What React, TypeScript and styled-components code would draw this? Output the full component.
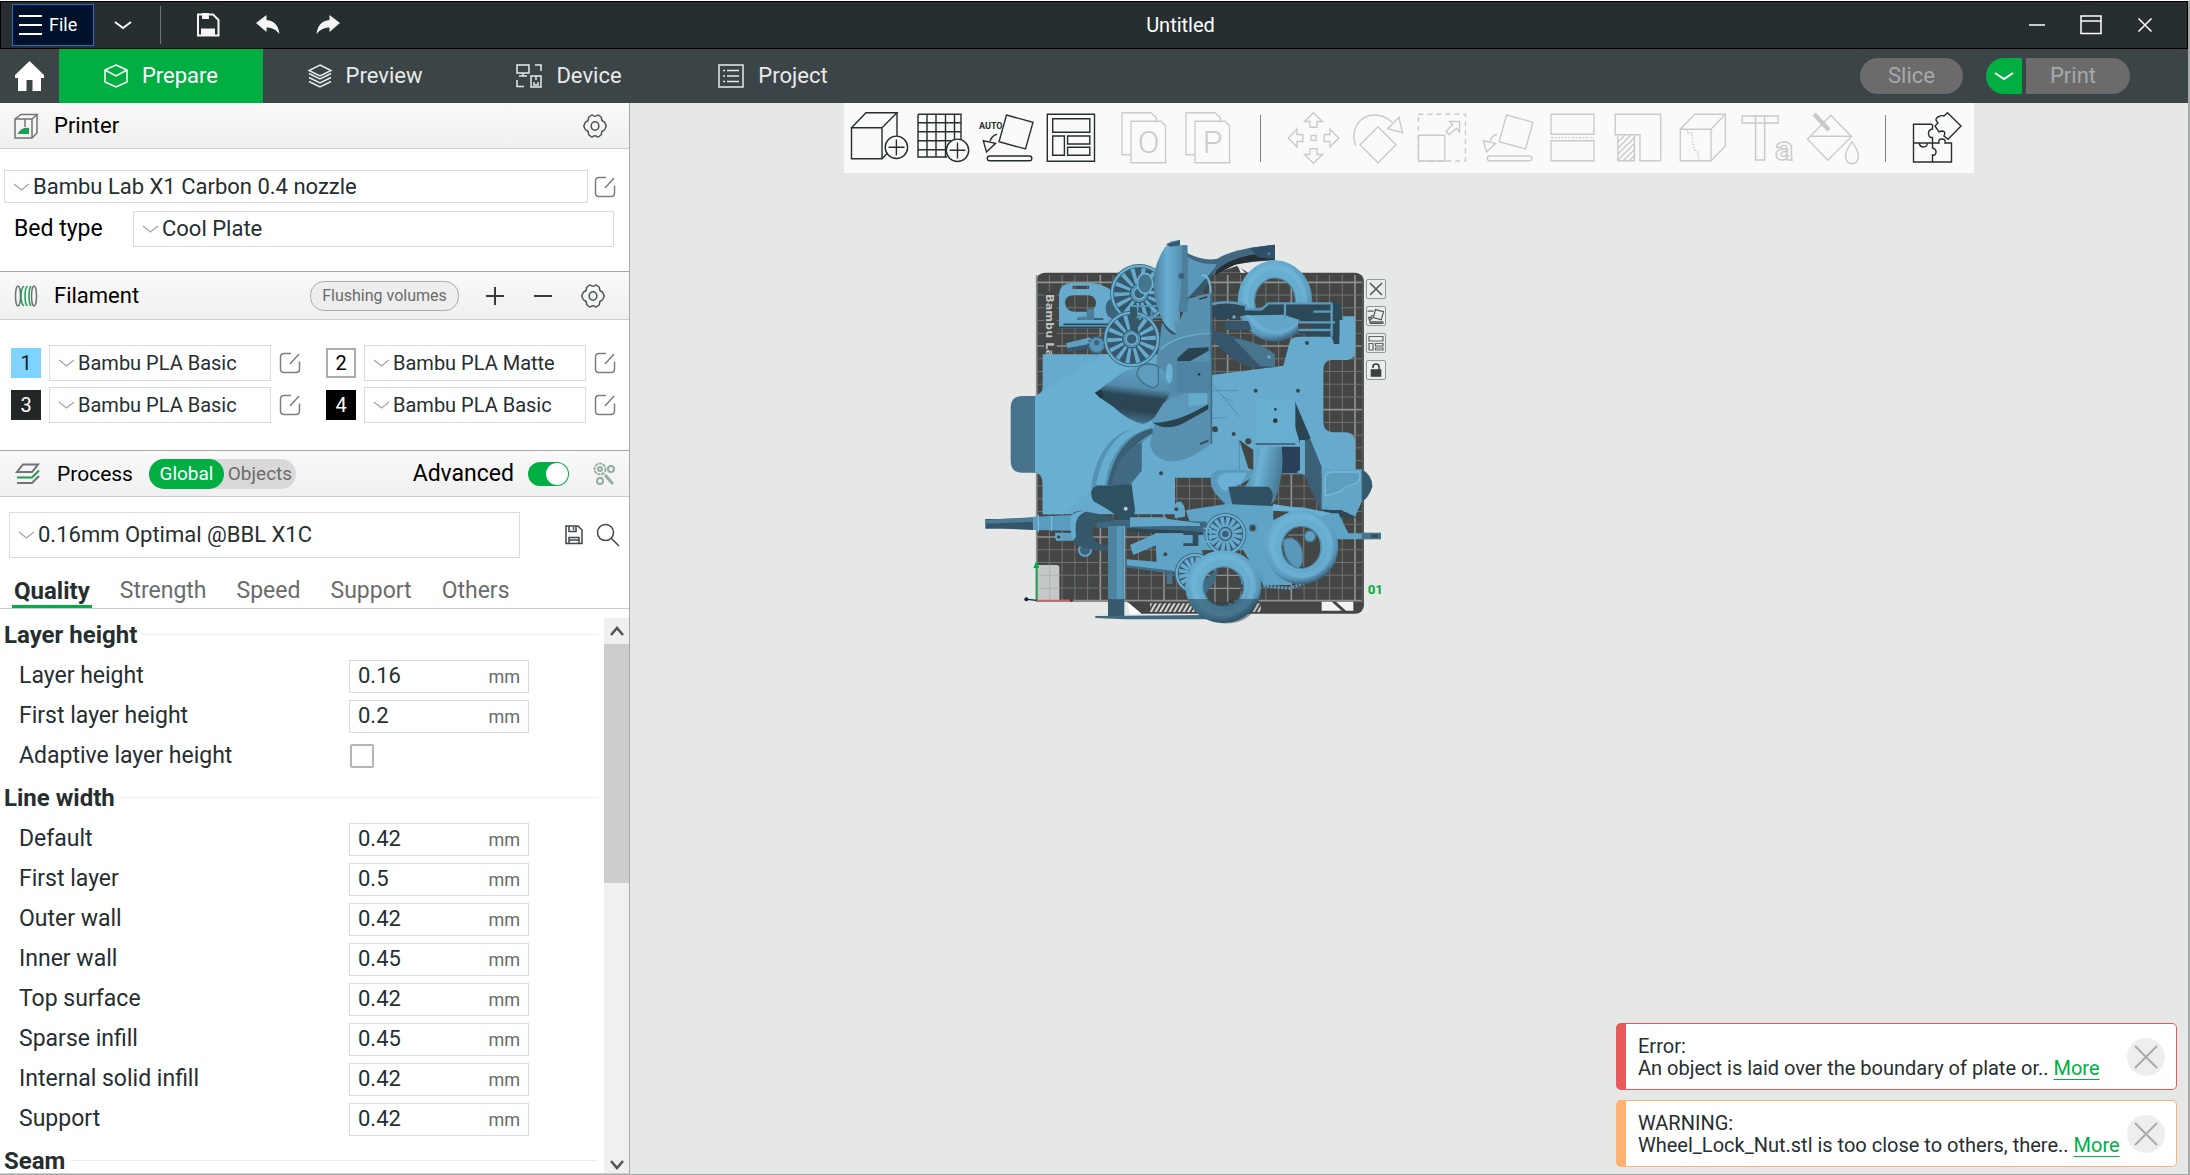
import React, { useState } from 'react';
import styled, { createGlobalStyle, css } from 'styled-components';

const color = {
  green: '#00ae42',
  ink: '#262e30',
  bar: '#3b4446',
  line: '#cecece',
  field: '#dbdbdb',
  muted: '#6b6b6b',
  canvas: '#e6e8e7',
  off: '#c9cbca',
};

const GlobalStyle = createGlobalStyle`
  * { box-sizing: border-box; }
  body {
    margin: 0;
    font-family: Roboto, "Noto Sans", sans-serif;
    font-size: 22px;
    line-height: 28px;
    color: ${color.ink};
    background: ${color.canvas};
  }
  button, input, select { font: inherit; color: inherit; margin: 0; padding: 0; }
  button { border: 0; background: none; }
  svg { display: block; flex: none; overflow: visible; }
`;

const Shell = styled.div`
  height: 100vh;
  display: flex;
  flex-direction: column;
  overflow: hidden;
  border-top: 1px solid #fff;
  border-right: 2px solid #a5a9a8;
  border-bottom: 1px solid #a5a9a8;
`;

/* ---------- title bar ---------- */
const TitleBar = styled.header`
  height: 48px;
  flex: none;
  display: flex;
  align-items: center;
  padding: 0 30px 0 11px;
  background: ${color.ink};
  border: 1px solid #000;
  color: #fff;
  font-size: 18px;
  line-height: 24px;
`;
const TitleGroup = styled.div<{ $gap: number }>`
  display: flex;
  align-items: center;
  gap: ${p => p.$gap}px;
`;
const FileButton = styled.button`
  display: flex;
  align-items: center;
  gap: 7px;
  width: 82px;
  height: 42px;
  padding-left: 6px;
  background: #00122b;
  border: 1px solid #1f70c1;
`;
const BarButton = styled.button`
  display: grid;
  place-items: center;
  width: 24px;
  height: 40px;
`;
const BarDivider = styled.span`
  width: 1px;
  height: 38px;
  margin-right: 10px;
  background: #6f7677;
`;
const DocTitle = styled.h1`
  flex: 1;
  margin: 0;
  padding-right: 4px;
  text-align: center;
  font-size: 20px;
  font-weight: 400;
`;

/* ---------- main tabs ---------- */
const TabBar = styled.nav`
  height: 54px;
  flex: none;
  display: flex;
  align-items: stretch;
  background: ${color.bar};
  color: #fff;
`;
const HomeButton = styled.button`
  width: 59px;
  display: grid;
  place-items: center;
`;
const MainTab = styled.button<{ $active?: boolean }>`
  width: 204px;
  display: flex;
  align-items: center;
  justify-content: center;
  gap: 14px;
  color: ${p => (p.$active ? '#fff' : '#e8eaea')};
  background: ${p => (p.$active ? color.green : 'transparent')};
`;
const Actions = styled.div`
  margin-left: auto;
  display: flex;
  align-items: center;
  padding-right: 58px;
`;
const Pill = styled.button<{ $shape: 'full' | 'left' | 'right' }>`
  height: 36px;
  display: grid;
  place-items: center;
  color: #a6a9aa;
  background: #6b6b6b;
  ${p => p.$shape === 'full' && css`width: 103px; border-radius: 18px; margin-right: 23px;`}
  ${p => p.$shape === 'left' && css`width: 36px; border-radius: 18px 0 0 18px; background: ${color.green}; margin-right: 4px;`}
  ${p => p.$shape === 'right' && css`width: 104px; border-radius: 0 18px 18px 0; padding-right: 10px;`}
`;

/* ---------- sidebar ---------- */
const Body = styled.div`
  flex: 1;
  min-height: 0;
  display: flex;
`;
const Sidebar = styled.aside`
  width: 630px;
  flex: none;
  display: flex;
  flex-direction: column;
  background: #fff;
  border-right: 1px solid #a5a9a8;
`;
const PanelHeader = styled.div<{ $h: number; $first?: boolean; $end?: number }>`
  height: ${p => p.$h}px;
  flex: none;
  display: flex;
  align-items: center;
  padding: 0 ${p => p.$end ?? 22}px 0 14px;
  color: #000;
  background: linear-gradient(#f9f9f9, #f0f0f0);
  border-top: ${p => (p.$first ? 0 : 1)}px solid #a5a9a8;
  border-bottom: 1px solid ${color.line};
`;
const PanelTitle = styled.h2`
  margin: 0 auto 0 16px;
  font-size: 22px;
  font-weight: 400;
`;
const IconButton = styled.button<{ $w?: number }>`
  width: ${p => p.$w ?? 24}px;
  height: 28px;
  display: grid;
  place-items: center;
`;
const FlushButton = styled.button`
  height: 30px;
  width: 149px;
  margin-right: 24px;
  border: 1px solid #acaeae;
  border-radius: 14px;
  background: #eee;
  color: ${color.muted};
  font-size: 16px;
  line-height: 22px;
`;
const HeaderTools = styled.div`
  display: flex;
  gap: 24px;
  align-items: center;
`;
const SelectBox = styled.span<{ $h: number }>`
  flex: 1;
  min-width: 0;
  height: ${p => p.$h}px;
  display: flex;
  align-items: center;
  gap: 3px;
  padding: 0 8px;
  border: 1px solid ${color.field};
  background: #fff;
`;
const BareSelect = styled.select`
  appearance: none;
  flex: 1;
  min-width: 0;
  border: 0;
  outline: 0;
  background: transparent;
`;
const PrinterBody = styled.div`
  height: 122px;
  flex: none;
  padding: 21px 15px 0 4px;
  display: flex;
  flex-direction: column;
  gap: 8px;
`;
const Line = styled.div`
  display: flex;
  align-items: center;
  gap: 6px;
`;
const BedLine = styled.div`
  display: grid;
  grid-template-columns: 119px 1fr;
  align-items: center;
  padding-left: 10px;
`;
const BedLabel = styled.label`
  color: #000;
  font-size: 23px;
`;
const FilamentGrid = styled.div`
  height: 130px;
  flex: none;
  display: grid;
  grid-template-columns: 1fr 1fr;
  grid-auto-rows: 36px;
  align-content: start;
  gap: 6px 25px;
  padding: 25px 13px 0 11px;
`;
const FilamentItem = styled.div`
  display: flex;
  align-items: center;
  gap: 8px;
  font-size: 20px;
`;
const Swatch = styled.button<{ $bg: string; $fg: string; $outlined?: boolean }>`
  width: 30px;
  height: 30px;
  line-height: 24px;
  background: ${p => p.$bg};
  color: ${p => p.$fg};
  border: ${p => (p.$outlined ? '2px solid #acacac' : '0')};
`;
const Segmented = styled.div`
  display: flex;
  width: 147px;
  height: 30px;
  margin: 0 auto 0 16px;
  border-radius: 15px;
  background: #d9d9d9;
`;
const Segment = styled.button<{ $on?: boolean }>`
  flex: ${p => (p.$on ? '0 0 75px' : '1')};
  border-radius: 15px;
  font-size: 19px;
  line-height: 22px;
  background: ${p => (p.$on ? color.green : 'transparent')};
  color: ${p => (p.$on ? '#fff' : color.muted)};
`;
const ProcessTitle = styled(PanelTitle)`
  margin: 0;
  padding-left: 17px;
  font-size: 21px;
`;
const SwitchLabel = styled.label`
  display: flex;
  align-items: center;
  gap: 14px;
  margin-right: 23px;
  font-size: 23px;
`;
const Switch = styled.input`
  appearance: none;
  width: 41px;
  height: 24px;
  border-radius: 12px;
  background: #bbb;
  display: flex;
  align-items: center;
  &::after {
    content: '';
    width: 22px;
    height: 22px;
    margin: 0 1px;
    border-radius: 50%;
    background: #fff;
  }
  &:checked { background: ${color.green}; justify-content: flex-end; }
`;
const PresetLine = styled.div`
  display: flex;
  align-items: center;
  gap: 8px;
  flex: none;
  padding: 15px 9px 0 9px;
`;
const PresetSelect = styled.div`
  display: flex;
  width: 512px;
  margin-right: 32px;
`;
const SettingTabs = styled.div`
  flex: none;
  display: flex;
  gap: 26px;
  height: 51px;
  padding: 0 12px;
  border-bottom: 1px solid ${color.line};
`;
const SettingTab = styled.button<{ $on?: boolean }>`
  height: 50px;
  padding: 19px 2px 0;
  color: ${p => (p.$on ? color.ink : color.muted)};
  font-size: ${p => (p.$on ? 24 : 23)}px;
  font-weight: ${p => (p.$on ? 700 : 400)};
  border-bottom: 3px solid ${p => (p.$on ? color.green : 'transparent')};
`;
const ScrollPane = styled.div`
  flex: 1;
  min-height: 0;
  display: flex;
  border-bottom: 1px solid #d0d0d0;
`;
const Settings = styled.div`
  flex: 1;
  padding: 4px 6px 0 4px;
  overflow: hidden;
`;
const GroupTitle = styled.h3`
  display: flex;
  align-items: center;
  gap: 5px;
  height: 43px;
  margin: 0;
  font-size: 24px;
  font-weight: 700;
  &::after { content: ''; flex: 1; height: 1px; background: #ececec; }
`;
const SettingRow = styled.div`
  display: grid;
  grid-template-columns: 330px 180px;
  align-items: center;
  height: 40px;
  padding-left: 15px;
`;
const SettingLabel = styled.label`
  font-size: 23px;
`;
const ValueBox = styled.span`
  display: flex;
  align-items: baseline;
  height: 33px;
  padding: 1px 8px;
  border: 1px solid ${color.field};
`;
const ValueInput = styled.input`
  flex: 1;
  min-width: 0;
  height: 28px;
  border: 0;
  outline: 0;
  background: transparent;
`;
const Unit = styled.span`
  font-size: 18px;
  color: ${color.muted};
`;
const Check = styled.input`
  appearance: none;
  width: 24px;
  height: 24px;
  margin-left: 1px;
  border: 2px solid #b4b4b4;
  border-radius: 2px;
  background: #fff;
`;
const ScrollTrack = styled.div`
  width: 25px;
  margin-top: 9px;
  display: flex;
  flex-direction: column;
  background: #f0f0f0;
`;
const ScrollButton = styled.button<{ $h: number }>`
  height: ${p => p.$h}px;
  flex: none;
  display: grid;
  place-items: center;
`;
const ScrollThumb = styled.div`
  flex: 0 0 43%;
  background: #cdcdcd;
`;
const ScrollRest = styled.div`
  flex: 1;
`;

/* ---------- viewport ---------- */
const Viewport = styled.main`
  flex: 1;
  min-width: 0;
  position: relative;
  display: flex;
  flex-direction: column;
  align-items: center;
  background: ${color.canvas};
`;
const Toolbar = styled.div`
  height: 70px;
  display: flex;
  padding: 0 4px;
  background: #fafafa;
`;
const ToolGroup = styled.div`
  display: flex;
  align-items: center;
  &:nth-child(2) { margin-left: 8px; }
`;
const ToolButton = styled.button<{ $w?: number }>`
  width: ${p => p.$w ?? 64}px;
  height: 70px;
  display: grid;
  place-items: center;
`;
const ToolDivider = styled.span`
  width: 1px;
  height: 47px;
  margin: 12px 20px;
  background: #7c8383;
  &:nth-child(3) { margin-right: 19px; }
`;
const Plate = styled.div`
  position: absolute;
  left: 340px;
  top: 117px;
`;
const PlateButtons = styled.div`
  position: absolute;
  left: 396px;
  top: 59px;
  display: flex;
  flex-direction: column;
  gap: 7px;
`;
const PlateButton = styled.button`
  width: 20px;
  height: 20px;
  display: grid;
  place-items: center;
  border: 1px solid #8b9a93;
  border-radius: 2px;
  background: #eceeed;
`;
const Toasts = styled.div`
  position: absolute;
  right: 11px;
  bottom: 7px;
  display: flex;
  flex-direction: column;
  gap: 10px;
`;
const Toast = styled.div<{ $tone: string }>`
  width: 561px;
  height: 67px;
  display: flex;
  align-items: center;
  padding: 0 11px 0 12px;
  border: 1px solid ${p => p.$tone};
  border-left-width: 10px;
  border-radius: 5px;
  background: #fff;
  font-size: 20px;
  line-height: 22px;
`;
const ToastText = styled.p`
  flex: 1;
  margin: 0;
  white-space: nowrap;
`;
const More = styled.a`
  color: ${color.green};
  text-decoration: underline;
  text-decoration-thickness: 1px;
  text-underline-offset: 4px;
`;
const ToastClose = styled.button`
  width: 38px;
  height: 38px;
  display: grid;
  place-items: center;
  border-radius: 50%;
  background: #eee;
`;

/* ---------- small icons ---------- */
type IconProps = { w: number; h: number; stroke?: string; sw?: number; children: React.ReactNode };
const Icon = ({ w, h, stroke = 'currentColor', sw = 1.5, children }: IconProps) => (
  <svg width={w} height={h} viewBox={`0 0 ${w} ${h}`} fill="none" stroke={stroke} strokeWidth={sw} aria-hidden="true">
    {children}
  </svg>
);
const Gear = () => (
  <Icon w={24} h={24} stroke="#4a5253">
    <path d="M8 1.5Q9 .5 10 1.5Q12 3 14 1.5Q15 .5 16 1.5L18 3Q18.500 3.500 18.500 4.500Q18.500 7 20.500 7.500Q21.500 8 22 9L23.200 12L22 15Q21.500 16 20.500 16.500Q18.500 17 18.500 19.500Q18.500 20.500 18 21L16 22.500Q15 23.500 14 22.500Q12 21 10 22.500Q9 23.500 8 22.500L6 21Q5.500 20.500 5.500 19.500Q5.500 17 3.500 16.500Q2.500 16 2 15L.8 12L2 9Q2.500 8 3.500 7.500Q5.500 7 5.500 4.500Q5.500 3.500 6 3Z" />
    <ellipse cx="12" cy="12" rx="3.800" ry="4.200" />
  </Icon>
);
const Edit = () => (
  <Icon w={22} h={22} stroke="#7b7f80">
    <path d="M12 1.500H5Q1.500 1.500 1.500 5V17Q1.500 20.500 5 20.500H17Q20.500 20.500 20.500 17V9.500M11 12L20 2" />
  </Icon>
);
const Chevron = ({ stroke = '#a3a6a6', w = 17, sw = 1.3 }: { stroke?: string; w?: number; sw?: number }) => (
  <Icon w={w} h={10} stroke={stroke} sw={sw}>
    <path d={`M1 2L${w / 2} 8L${w - 1} 2`} />
  </Icon>
);
const Floppy = () => (
  <Icon w={18} h={20} stroke="#3f4748">
    <path d="M1 1H13L17 5V18.500H1ZM4 1V6.500H11V1M8.500 2V5M4 18V12.500H14V18M4 15H14" />
  </Icon>
);

const Select = ({ id, label, value, h }: { id: string; label: string; value: string; h: number }) => (
  <SelectBox $h={h}>
    <Chevron />
    <BareSelect id={id} aria-label={label} defaultValue={value}>
      <option>{value}</option>
    </BareSelect>
  </SelectBox>
);

/* ---------- toolbar drawings ---------- */
const Tool = ({ on, children }: { on?: boolean; children: React.ReactNode }) => (
  <Icon w={60} h={56} stroke={on ? color.ink : color.off} sw={1.4}>{children}</Icon>
);
const FlattenShape = () => (
  <>
    <path d="M28.500 5L55 12.300L47.500 39L21 31.700ZM19 24.300Q14 25.500 12 31M5.300 30.700L17.600 33.300L8.500 42Z" />
    <rect x="9.300" y="46" width="44.500" height="4.700" rx="2.300" />
  </>
);
const ArrangeShape = () => (
  <path d="M5.300 4.300H52.500V51.300H5.300ZM10.700 8.700H47.800V22.300H10.700ZM10.700 26H22.400V45.300H10.700ZM25.600 26H47.800V34H25.600ZM25.600 37.300H47.800V45.300H25.600Z" />
);
const Page = ({ letter }: { letter: string }) => (
  <Tool>
    <path d="M16.500 44.700H8V2.700H37L42.500 8V11M17 11.300H47L51.500 16V52.700H17Z" />
    <text x="34.500" y="43" fontSize="32" fontWeight="300" textAnchor="middle" fill={color.off} stroke="none">{letter}</text>
  </Tool>
);
const addTools = [
  { name: 'Add', art: <Tool on><path d="M1.500 17.700H32V48.700H1.500ZM1.500 17.700L16 2.700H47L32 17.700M47 2.700V26M32 48.700L37 43.500" /><circle cx="46.400" cy="37.300" r="11.200" /><path d="M38.500 37.300H54.500M46.400 29.500V45.500" /></Tool> },
  { name: 'Add plate', art: <Tool on><path d="M4 4.300H47V29M4 4.300V47H33M13 4V47M22 4V47M31.500 4V47M40.500 4V29M4 12.700H47M4 21.700H47M4 30.700H37M4 39.700H32" /><circle cx="43.500" cy="40.300" r="11.200" /><path d="M35.500 40.300H51.500M43.500 32.500V48.500" /></Tool> },
  { name: 'Auto orient', art: <Tool on><FlattenShape /><text x="1" y="19" fontSize="9" fontWeight="700" fill={color.ink} stroke="none">AUTO</text></Tool> },
  { name: 'Arrange', art: <Tool on><ArrangeShape /></Tool> },
];
const arrow = 'M30.500 2.800L39.500 11.500H34V17.300H27V11.500H21.500Z';
const editTools = [
  { name: 'Move', art: <Tool>{[0, 90, 180, 270].map(a => <path key={a} d={arrow} transform={`rotate(${a} 30.5 28)`} />)}<rect x="28" y="25.500" width="5" height="5" /></Tool> },
  { name: 'Rotate', art: <Tool><path d="M30 16.700L48 34.700L30 52.700L12 34.700ZM7.600 36C2 20 11 5 27 5Q36 5 44 12M51 7.300L54.500 22.700L39.600 18.700Z" /></Tool> },
  { name: 'Scale', art: <Tool><rect x="5.400" y="4.300" width="47.100" height="46.700" strokeDasharray="5 4" /><path d="M5.400 25.300H31.800V51H5.400ZM36 24.500L33 21.500L39.500 14.500L36.500 11.500H46.500V22L43.500 18.500Z" /></Tool> },
  { name: 'Lay on face', art: <Tool><FlattenShape /></Tool> },
  { name: 'Cut', art: <Tool><path d="M8 4.300H51V24.300H8ZM8 30.700H51V50.700H8Z" /><path d="M8 27.600H51" strokeDasharray="2 1.500" /></Tool> },
  { name: 'Support painting', art: <Tool><path d="M7.200 4.300H52.700V50.700H32V24.700H7.200ZM9.800 24.700V50.700H26.400V24.700M10 32L17 25M10 38L23 25M10 44L26 28M10 50L26 34M15 51L26 40M21 51L26 46" /></Tool> },
  { name: 'Seam painting', art: <Tool><path d="M7.300 19.300H38V50.700H7.300ZM7.300 19.300L21.600 4.300H52.400L38 19.300M52.400 4.300V36L38 50.700" /><path d="M14.400 20V23H18.500L21 39L25.400 43V50" strokeDasharray="1.500 1.500" /></Tool> },
  { name: 'Text shape', art: <Tool><text x="3" y="50" fontSize="62" fontWeight="700" fill="#fafafa">T<tspan x="37" fontSize="34">a</tspan></text></Tool> },
  { name: 'Colour painting', art: <Tool><path d="M27.800 5.300L48.500 26.500L24.800 50.300L4.500 29.300ZM7 26.300H48M49 31.700Q55.500 41 55.500 46.500Q55 53.500 49 53.700Q43 53.500 42.500 46.500Q42.500 41 49 31.700Z" /><path d="M11 4L26 20" strokeWidth="4.500" /></Tool> },
];
const Assembly = () => (
  <Tool on>
    <path d="M24 14.300H5.500V52H43.500V33H37Q38 29 34 29Q30 29 31 33H5.500M11 33Q12 37 15.500 37Q19 37 19.500 33M24.500 14.300V19Q20 20 20.500 24Q21 28 24.500 27.500V38Q28.500 39 28 42.500Q27.500 46 24.500 45V52" />
    <path d="M39.500 2.700L53 16L40 29.300L36 26Q38 22 35 21Q32 21 31 22L27 16L30 13Q26 9 30 7Q34 5 36 6Z" />
  </Tool>
);

/* ---------- plate scene, drawn at three units per pixel ---------- */
const steps = Array.from({ length: 26 }, (_, i) => i);
const Rim = ({ x, y, r, n = 14 }: { x: number; y: number; r: number; n?: number }) => (
  <g>
    <circle cx={x} cy={y} r={r} fill="#36566a" />
    {Array.from({ length: n }, (_, i) => (
      <path key={i} d={`M${x - 3} ${y}L${x - 7} ${y - r}H${x + 7}L${x + 3} ${y}Z`} fill="#66abcd" transform={`rotate(${(360 / n) * i + 10} ${x} ${y})`} />
    ))}
    <circle cx={x} cy={y} r={r - 3} fill="none" stroke="#3f6a82" strokeWidth="12" />
    <circle cx={x} cy={y} r={r - 3} fill="none" stroke="#6cb3d6" strokeWidth="6" />
    <circle cx={x} cy={y} r={r * 0.33} fill="#5791b0" stroke="#2f4f60" strokeWidth="3" />
    <circle cx={x} cy={y} r={r * 0.2} fill="#3a5f74" stroke="#6cb3d6" strokeWidth="4" />
  </g>
);
const Tire = ({ x, y, rx, ry, hx, hy }: { x: number; y: number; rx: number; ry: number; hx: number; hy: number }) => {
  const ring = (a: number, b: number) => `M${x - a} ${y}a${a} ${b} 0 1 0 ${2 * a} 0a${a} ${b} 0 1 0 ${-2 * a} 0Z`;
  return (
    <g fillRule="evenodd">
      <path d={ring(rx, ry) + ring(hx, hy)} fill="url(#tire)" />
      <ellipse cx={x} cy={y - 4} rx={(rx + hx) / 2 + 2} ry={(ry + hy) / 2 + 2} fill="none" stroke="#72b8dc" strokeWidth={(rx - hx) * 0.3} opacity="0.55" />
      <path d={ring(hx + 3, hy + 3) + ring(hx, hy)} fill="#4b7f9b" />
    </g>
  );
};
const Scene = () => (
  <svg width="430" height="420" viewBox="0 0 1290 1260" role="img" aria-label="Build plate with model parts">
    <defs>
      <radialGradient id="tire" cx="0.45" cy="0.4" r="0.62">
        <stop offset="0.6" stopColor="#67add0" />
        <stop offset="0.85" stopColor="#5b99bb" />
        <stop offset="1" stopColor="#315468" />
      </radialGradient>
      <linearGradient id="shell" x1="0" x2="1">
        <stop offset="0" stopColor="#4b7f9b" />
        <stop offset="0.4" stopColor="#68aed2" />
        <stop offset="0.75" stopColor="#5a97b8" />
        <stop offset="1" stopColor="#4a7b96" />
      </linearGradient>
      <linearGradient id="cone" x1="0.35" y1="0" x2="0.2" y2="1">
        <stop offset="0" stopColor="#5e9fc1" />
        <stop offset="0.35" stopColor="#548cab" />
        <stop offset="0.5" stopColor="#2b4755" />
        <stop offset="0.72" stopColor="#2b4452" />
        <stop offset="1" stopColor="#4d819e" />
      </linearGradient>
      <linearGradient id="arch" x1="0" x2="1" y1="0.3" y2="0.6">
        <stop offset="0" stopColor="#3f6b83" />
        <stop offset="0.45" stopColor="#6bb2d6" />
        <stop offset="1" stopColor="#426f87" />
      </linearGradient>
      <pattern id="hatch" width="14" height="28" patternUnits="userSpaceOnUse" patternTransform="skewX(-30)">
        <rect width="7" height="28" fill="#d8dada" />
      </pattern>
    </defs>

    {/* plate */}
    <rect x="198" y="158" width="984" height="1023" rx="26" fill="#434645" />
    <path d="M740 158L800 138L835 158Z" fill="#434645" />
    <path d="M804 138L826 158H812Z" fill="#fff" />
    {steps.map(i => (
      <path key={`v${i}`} d={`M${200 + i * 38.2} 165V1142`} stroke={i % 5 ? '#707372' : '#8e9190'} strokeWidth={i % 5 ? 3 : 5} />
    ))}
    {steps.map(i => (
      <path key={`h${i}`} d={`M200 ${1142 - i * 38.2}H1175`} stroke={i % 5 ? '#707372' : '#8e9190'} strokeWidth={i % 5 ? 3 : 5} />
    ))}
    <path d="M1179 180V1150" stroke="#555857" strokeWidth="6" />
    <rect x="222" y="215" width="38" height="200" fill="#434645" />
    <text transform="translate(229 222) rotate(90)" fontSize="34" fontWeight="700" fill="#bfc2c1" fontFamily="DejaVu Sans, sans-serif">Bambu Lab</text>
    <path d="M195 1145H470L515 1183H195Z" fill="#e6e8e7" />
    <path d="M470 1145H530L515 1183Z" fill="#434645" />
    <path d="M472 1145L515 1181H480Z" fill="#fff" />
    <rect x="540" y="1150" width="332" height="26" fill="url(#hatch)" />
    <path d="M1055 1145H1085L1115 1172H1055ZM1098 1145H1150V1172H1128Z" fill="#f2f3f3" />
    <path d="M203 1035H260Q268 1035 268 1043V1140H203Z" fill="#c6c8c7" />
    <path d="M239 1035V1140M203 1066H268M203 1105H268" stroke="#9fb0a4" strokeWidth="2" />

    {/* flat body panel */}
    <path d="M200 528H155Q122 530 122 562V725Q124 758 155 758H200Z" fill="#46738b" />
    <path d="M218 403H725V465L940 437L958 370Q965 350 985 350H1108V289H1155V398Q1152 418 1130 420H1085Q1060 422 1060 450V610Q1062 636 1090 637H1130Q1155 640 1155 665V775H1055V760H905V773H615V883H218V790Q216 758 195 757V528Q218 525 218 500Z" fill="#66abcd" />
    <path d="M195 528V757Q216 758 218 790V883H280L500 690V403H400Z" fill="#69afd2" />
    <path d="M725 490L810 592M725 594H770M725 512H806M757 530L790 545M808 660V760" stroke="#4d819d" strokeWidth="2" fill="none" />
    <g fill="#3a464b">
      <circle cx="857" cy="512" r="6" /><circle cx="984" cy="512" r="6" /><circle cx="1011" cy="369" r="6" />
      <circle cx="791" cy="642" r="6" /><circle cx="835" cy="664" r="9" /><circle cx="735" cy="628" r="9" /><circle cx="573" cy="760" r="6" />
    </g>
    <path d="M808 660L835 745L850 750V690Z" fill="#434645" />
    <path d="M935 680H1010V760H925Z" fill="#29405a" />
    <path d="M975 545L1055 740L1055 875L1000 760Z" fill="#3c6076" />
    <path d="M975 545L1022 655L990 670L975 620Z" fill="#2b4452" />
    <rect x="857" y="538" width="119" height="135" rx="14" fill="#68aed1" />
    <path d="M857 672H976" stroke="#35566a" strokeWidth="5" />
    <circle cx="916" cy="602" r="7" fill="#2b3a42" /><circle cx="916" cy="568" r="4" fill="#2b3a42" />

    {/* bracket, arm and gear at the top left */}
    <path fillRule="evenodd" d="M267 325V222Q270 190 304 189H365Q400 192 425 212L440 325ZM308 197V207H357V197ZM310 225Q285 228 285 248Q288 274 312 275H355Q378 270 378 248Q376 228 355 225Z" fill="#66abcd" />
    <path d="M267 322H445M280 313H440M322 297H400" stroke="#2d4a5a" strokeWidth="5" />
    <path d="M350 266H372V300H325V290H350Z" fill="#4b7f9b" />
    <path d="M288 370L360 352L372 376L296 395Z" fill="#5da0c3" />
    <path d="M290 385L370 370L372 382L296 396Z" fill="#35586c" />
    <circle cx="380" cy="375" r="24" fill="#5794b5" stroke="#3b6379" strokeWidth="7" strokeDasharray="7 5" />
    <circle cx="380" cy="368" r="8" fill="#3b6379" />
    <ellipse cx="428" cy="265" rx="24" ry="32" fill="#3c6379" stroke="#66abcd" strokeWidth="5" />
    <Rim x={508} y={220} r={85} />
    <ellipse cx="525" cy="190" rx="23" ry="30" fill="#46758e" stroke="#6cb3d6" strokeWidth="5" />
    <Rim x={485} y={357} r={82} />
    <path d="M480 258L500 250L505 345L480 325Z" fill="#36566a" />
    <path d="M480 258H570M500 292H575M510 282V300M545 270V300" stroke="#5594b5" strokeWidth="6" />

    {/* top right wing, tyre and axle */}
    <path d="M650 98Q700 125 742 116Q790 85 915 74V121Q860 122 800 132Q755 145 700 185L650 240Z" fill="#416880" />
    <path d="M740 150Q790 105 900 98L915 120Q850 122 795 134L735 165Z" fill="#242e33" />
    <path d="M840 84L915 74V118L865 112Z" fill="#2f4e6a" />
    <path d="M652 110Q690 135 740 132Q725 170 652 236Z" fill="#5a96b7" />
    <path d="M652 236L735 145L700 215Z" fill="#35586c" />
    <path d="M694 166Q722 162 722 225" stroke="#6cb3d6" strokeWidth="7" fill="none" />
    <path d="M725 330Q800 345 915 402V442H850Q780 430 725 352Z" fill="#36576b" />
    <path d="M790 355Q860 362 915 402V440L870 438Z" fill="#47758e" />
    <ellipse cx="915" cy="233" rx="66" ry="74" fill="none" stroke="#2f4f60" strokeWidth="12" />
    <Tire x={915} y={243} rx={112} ry={122} hx={60} hy={68} />
    <path d="M765 303H835L845 330H765Z" fill="#36576b" />
    <path d="M725 262Q770 240 830 255V266H880Q890 250 920 250H1080L1112 250L1118 300L1108 300V372H1092L1085 350L985 340V302L940 285Q870 290 830 285L760 300Q725 296 725 280Z" fill="#2d4958" />
    <path d="M985 306H1025V330H985Z" fill="#434645" />
    <path d="M850 286Q875 330 915 333Q960 330 990 300L940 284Z" fill="#62a6c9" />
    <path d="M725 252Q775 240 828 256V268H875L895 250H1085M1030 275H1085M945 250V295M985 307H1095M985 330H1085M1085 250V350" stroke="#5b9bbd" strokeWidth="7" fill="none" />
    <circle cx="792" cy="291" r="5" fill="#6cb3d6" />
    <circle cx="897" cy="411" r="5" fill="#78aac3" /><circle cx="897" cy="101" r="5" fill="#54788d" />

    {/* central body */}
    <path d="M630 300L655 236L722 218V672Q640 735 590 722Q545 712 540 670L565 560Q550 430 568 380L575 310Z" fill="#5891b0" />
    <path d="M568 395Q610 350 722 340V386Q650 385 625 420V520H720V552L640 600Q580 625 548 600Z" fill="#548ba9" />
    <path d="M622 415L655 385L716 382V392L660 424H622Z" fill="#29424f" />
    <path d="M572 390Q610 345 722 340" stroke="#6bb0d2" strokeWidth="4" fill="none" />
    <rect x="622" y="424" width="98" height="94" fill="#4e84a1" />
    <path d="M688 238L712 230M690 672L715 662" stroke="#29424f" strokeWidth="5" />
    <circle cx="687" cy="463" r="4" fill="#233740" />
    <path d="M602 64L630 60V76H652V275H630V306H613L620 342Q603 350 580 305Q538 220 556 145Q572 90 602 64Z" fill="url(#shell)" />
    <path d="M637 76H652V275H625Q640 170 637 76Z" fill="#4b7e99" />
    <path d="M556 285L578 303Q595 330 620 342Q600 350 575 305Z" fill="#2f4d5e" />
    <path d="M588 72L630 60V76L600 80Z" fill="#365a70" />
    <circle cx="634" cy="168" r="9" fill="#3c6379" />
    <path d="M375 518L440 470Q480 440 540 432Q580 440 598 475Q610 520 585 545Q560 600 520 612Q470 600 430 560L390 533Z" fill="url(#cone)" />
    <ellipse cx="598" cy="460" rx="10" ry="30" fill="#7ac2e8" opacity="0.7" />
    <path d="M500 462Q505 432 535 432Q565 434 565 445V490Q560 505 545 502Q510 490 500 462Z" fill="#5e9dbe" stroke="#41708a" strokeWidth="4" />
    <path d="M375 518L395 510L400 530L390 534Z" fill="#24363f" />
    <path d="M545 605L580 550Q620 520 660 520H712V555L620 612Q570 630 545 605Z" fill="#5b98b9" />
    <path d="M548 608Q620 610 715 552V568L640 610Q590 635 548 608Z" fill="#29424f" />
    <path d="M656 520H712V552L656 560Z" fill="#65a9cb" />
    <path d="M724 218V672" stroke="#3e6a82" strokeWidth="5" />

    {/* left arch */}
    <path d="M545 615Q430 620 385 720Q362 780 365 805L480 795L515 750V670L548 640Z" fill="#5491b2" />
    <path d="M548 625Q440 650 412 795H440Q450 690 548 640Z" fill="#3a5f74" />
    <path d="M540 612Q410 625 378 795H405Q425 650 548 622Z" fill="#67add0" />
    <path d="M515 665V752L480 795H425Q440 700 515 665Z" fill="#406b83" />
    <path d="M365 810Q372 795 400 797L485 793L495 870Q492 900 475 903Q450 905 430 880Q395 855 372 845Q360 830 365 810Z" fill="#2f5060" />
    <circle cx="467" cy="866" r="6" fill="#b9cbd4" />

    {/* right arch, mirror and flared shell */}
    <path d="M722 780Q722 750 750 750H850V770L800 800L790 870Q770 860 745 830Q722 810 722 780Z" fill="#5a9abd" />
    <path d="M742 782Q745 760 770 758H830L815 790Q780 800 765 815Q745 800 742 782Z" fill="#6bb1d5" />
    <path d="M862 680H935Q945 760 915 840L860 900L800 830Q860 770 862 680Z" fill="url(#arch)" />
    <path d="M775 800H895Q915 815 905 845Q890 890 850 899Q820 900 790 868Z" fill="#2f5060" />
    <circle cx="816" cy="866" r="6" fill="#b9cbd4" />
    <path d="M1055 748H1175Q1207 765 1207 800Q1195 835 1175 845L1155 890L1115 870H1055Z" fill="#62a5c7" />
    <path d="M1175 748Q1207 765 1207 800Q1195 835 1175 845Z" fill="#365a6d" />
    <path d="M1066 770Q1070 756 1090 756H1165Q1176 775 1160 790Q1130 795 1110 815L1066 828Z" fill="#5d9dbf" stroke="#76b9db" strokeWidth="4" />
    <path d="M1055 868L1115 872L1162 893L1090 892Z" fill="#2c4857" />
    <path d="M990 660H1005V765L980 757L990 750Z" fill="#64a8ca" />

    {/* lower chassis */}
    <path d="M650 870L770 852L1000 862L1085 880L1100 1000L960 1095H880L820 990H690L650 880Z" fill="#5fa3c6" />
    <path d="M910 852L1085 880L1050 890L905 872Z" fill="#6bb2d6" />
    <path d="M910 872V900L960 875Z" fill="#434645" />
    <path d="M1085 880H1105L1135 940H1180V958H1100L1085 920Z" fill="#5fa3c6" />
    <path d="M1175 938H1233V958H1175Z" fill="#46738b" /><path d="M1204 943H1224V953H1204Z" fill="#2f4d5d" />
    <path d="M46 897H100L190 892V930L100 926H46Z" fill="#35566a" />
    <path d="M46 900L100 896L190 893V905L46 911Z" fill="#4a7b95" />
    <path d="M190 890L310 885V932L190 930Z" fill="#5b9bbd" /><path d="M205 885V935M245 888V932" stroke="#77bde0" strokeWidth="4" />
    <path d="M255 938H310V962H258Z" fill="#5da0c2" /><circle cx="266" cy="951" r="8" fill="#434645" stroke="#66abcd" strokeWidth="5" />
    <circle cx="345" cy="990" r="18" fill="#3c6379" stroke="#5da0c2" strokeWidth="6" />
    <path d="M380 900H590L710 905V935L480 925H380Z" fill="#3d677f" />
    <path d="M480 892H590V918L480 920ZM590 896L690 910V918H590Z" fill="#62a6c9" />
    <path d="M470 925L700 935V945L560 940L480 935Z" fill="#2c4654" />
    <path d="M480 975L560 940H670V970L560 975L490 1005Z" fill="#5fa3c6" />
    <path d="M555 940H680L700 1010L660 1060L470 1040V1018L560 1025Z" fill="#5fa3c6" />
    <path d="M470 1036L610 1052V1062L465 1042Z" fill="#416d85" />
    <path d="M640 935H685V978H640V970H668V945H640Z" fill="#2f4d5d" />
    <circle cx="586" cy="1003" r="6" fill="#434645" />
    <path d="M590 1060H607V1092H590Z" fill="#46738b" />
    <path d="M614 883V855Q620 842 632 845Q648 855 645 890L614 895Z" fill="#62a6c9" /><circle cx="619" cy="868" r="6" fill="#434645" />
    <path d="M310 878Q330 868 350 875L430 890V902L375 908V922L365 935Q370 965 390 972L440 983V998L345 985Q310 975 308 950Q300 905 310 878Z" fill="#35586b" />
    <path d="M302 890Q310 873 350 872L330 885Q312 900 318 950L310 962Q298 930 302 890Z" fill="#67add0" />
    <path d="M414 918H463V1138H414Z" fill="#4d83a0" /><path d="M440 918H458V1138H440Z" fill="#5a98ba" />
    <path d="M463 918V1138" stroke="#7cc0e2" strokeWidth="3" />
    <path d="M414 1138H463V1190H414Z" fill="#375a6c" />
    <path d="M376 1188L715 1185L760 1198H465L376 1194Z" fill="#41687d" />
    <path d="M740 1050H850L815 1095H740Z" fill="#4a7c97" /><path d="M745 1090H815" stroke="#66abcd" strokeWidth="7" />
    <path d="M870 1050L885 1098L960 1105L1000 1090" stroke="#5b9bbd" strokeWidth="9" strokeDasharray="7 4" fill="none" />
    <circle cx="848" cy="924" r="10" fill="#3a464b" stroke="#4d819d" strokeWidth="4" />
    <circle cx="1022" cy="948" r="20" fill="#5da0c2" stroke="#416d85" strokeWidth="4" strokeDasharray="5 4" />
    <Rim x={766} y={942} r={60} n={16} />
    <path d="M700 925H722V965H700" stroke="#66abcd" strokeWidth="5" fill="none" />
    <Rim x={675} y={1060} r={58} n={16} />
    <ellipse cx="994" cy="982" rx="58" ry="65" fill="#434645" />
    <path d="M955 945L1040 945M963 950V1040M1001 920V1040" stroke="#707372" strokeWidth="4" />
    <path d="M940 960Q975 940 995 985Q1005 1030 985 1045Q940 1030 940 960Z" fill="#5a98ba" stroke="#467790" strokeWidth="5" strokeDasharray="6 4" />
    <circle cx="1020" cy="949" r="17" fill="#5da0c2" stroke="#416d85" strokeWidth="4" />
    <Tire x={994} y={982} rx={111} ry={111} hx={58} hy={62} />
    <ellipse cx="752" cy="1097" rx="62" ry="60" fill="#434645" />
    <path d="M700 1066H812M700 1105H812M735 1040V1150M773 1040V1150" stroke="#8e9190" strokeWidth="4" />
    <path d="M692 1090L745 1045L735 1085L708 1120L715 1145Q692 1130 692 1090Z" fill="#3f6b83" />
    <Tire x={760} y={1100} rx={114} ry={109} hx={60} hy={58} />
    <path d="M652 1137H868Q850 1195 800 1207Q740 1220 690 1188Q665 1170 652 1137ZM718 1137Q750 1158 790 1137Z" fill="#23404f" fillRule="evenodd" opacity="0.5" />

    {/* axes and plate number */}
    <path d="M199 1142V1040M193 1042L199 1028L205 1042Z" stroke={color.green} strokeWidth="4" fill={color.green} />
    <path d="M199 1141H302" stroke="#e8585a" strokeWidth="4" /><path d="M300 1136L312 1141L300 1146Z" fill="#5a2b1c" />
    <path d="M172 1138L200 1141" stroke="#10203a" strokeWidth="4" /><circle cx="169" cy="1138" r="6" fill="#10203a" />
    <text x="1193" y="1121" fontSize="40" fontWeight="700" fill={color.green} fontFamily="Roboto, sans-serif">01</text>
  </svg>
);

/* ---------- data ---------- */
const filaments = [
  { n: 1, name: 'Bambu PLA Basic', bg: '#7fd4ff', fg: '#10202c' },
  { n: 2, name: 'Bambu PLA Matte', bg: '#fff', fg: '#000', outlined: true },
  { n: 3, name: 'Bambu PLA Basic', bg: '#232626', fg: '#fff' },
  { n: 4, name: 'Bambu PLA Basic', bg: '#000', fg: '#fff' },
];
const groups = [
  { title: 'Layer height', rows: [['Layer height', '0.16'], ['First layer height', '0.2'], ['Adaptive layer height', null]] },
  { title: 'Line width', rows: [['Default', '0.42'], ['First layer', '0.5'], ['Outer wall', '0.42'], ['Inner wall', '0.45'], ['Top surface', '0.42'], ['Sparse infill', '0.45'], ['Internal solid infill', '0.42'], ['Support', '0.42']] },
  { title: 'Seam', rows: [] },
] as { title: string; rows: [string, string | null][] }[];
const toasts = [
  { tone: '#e65a5a', head: 'Error:', text: 'An object is laid over the boundary of plate or..' },
  { tone: '#fdb172', head: 'WARNING:', text: 'Wheel_Lock_Nut.stl is too close to others, there..' },
];
const slug = (s: string) => s.toLowerCase().replace(/\s+/g, '-');

export default function App() {
  const [tab, setTab] = useState('Quality');
  const [advanced, setAdvanced] = useState(true);
  return (
    <Shell>
      <GlobalStyle />
      <TitleBar>
        <TitleGroup $gap={25}>
          <TitleGroup $gap={17}>
            <FileButton>
              <Icon w={23} h={20} sw={2}><path d="M0 1H23M0 10H23M0 19H23" /></Icon>
              File
            </FileButton>
            <BarButton aria-label="More file options"><Chevron stroke="#fff" w={18} sw={1.8} /></BarButton>
          </TitleGroup>
          <BarDivider />
          <TitleGroup $gap={36}>
            <BarButton aria-label="Save">
              <Icon w={24} h={24} stroke="#f5f5f5" sw={2}><path d="M2 1.500H17L22.500 7V22.500H2Z" /><path d="M6 0H13V6H6ZM5 15.500H19V23H5Z" fill="#f5f5f5" stroke="none" /></Icon>
            </BarButton>
            <BarButton aria-label="Undo">
              <Icon w={24} h={20}><path d="M0 8L10.500 0V5Q22 6 23.500 19Q18 12 10.500 12.500V17Z" fill="#f5f5f5" stroke="none" /></Icon>
            </BarButton>
            <BarButton aria-label="Redo">
              <Icon w={24} h={20}><path d="M24 8L13.500 0V5Q2 6 .5 19Q6 12 13.500 12.500V17Z" fill="#f5f5f5" stroke="none" /></Icon>
            </BarButton>
          </TitleGroup>
        </TitleGroup>
        <DocTitle>Untitled</DocTitle>
        <TitleGroup $gap={30}>
          <BarButton aria-label="Minimize"><Icon w={16} h={2} sw={1.5}><path d="M0 1H16" /></Icon></BarButton>
          <BarButton aria-label="Maximize"><Icon w={22} h={20}><path d="M1 1H21V18.500H1ZM1 6H21" /></Icon></BarButton>
          <BarButton aria-label="Close"><Icon w={14} h={14}><path d="M.5 .5L13.500 13.500M13.500 .5L.5 13.500" /></Icon></BarButton>
        </TitleGroup>
      </TitleBar>

      <TabBar>
        <HomeButton aria-label="Home">
          <Icon w={29} h={30}><path d="M14.500 0L29 14V17H26V30H17.500V19H11.500V30H3V17H0V14Z" fill="#fff" stroke="none" /></Icon>
        </HomeButton>
        <MainTab $active>
          <Icon w={24} h={24}><path d="M12 1L23 6V18L12 23L1 18V6ZM1 6L12 12L23 6" /></Icon>
          Prepare
        </MainTab>
        <MainTab>
          <Icon w={24} h={24}><path d="M12 1L23 6.500L12 12L1 6.500ZM1 9.500L12 15L23 9.500M1 13.500L12 19L23 13.500M1 17.500L12 23L23 17.500" /></Icon>
          Preview
        </MainTab>
        <MainTab>
          <Icon w={26} h={24}><path d="M1 1H13V9H1ZM7 9V12M3 12H11M19 1H25V7M1 16V22.500H8M15 12H25V23H15ZM18 18V21H22V18M20 12V16" /></Icon>
          Device
        </MainTab>
        <MainTab>
          <Icon w={26} h={24}><path d="M1 1H25V23H1ZM9 6.500H21M9 12H21M9 17.500H21M5 6.500H7M5 12H7M5 17.500H7" /></Icon>
          Project
        </MainTab>
        <Actions>
          <Pill $shape="full">Slice</Pill>
          <Pill $shape="left" aria-label="Print options"><Chevron stroke="#fff" w={20} sw={2} /></Pill>
          <Pill $shape="right">Print</Pill>
        </Actions>
      </TabBar>

      <Body>
        <Sidebar>
          <PanelHeader $h={46} $first>
            <Icon w={24} h={26} stroke="#6f7475">
              <path d="M1 6H18V25H1ZM1 6L7 1.500H23L18 6M23 1.500V20L18 25M11 6V14" />
              <path d="M4 20Q8 14 15 15V21H4Z" fill="#1f9a52" stroke="none" />
            </Icon>
            <PanelTitle>Printer</PanelTitle>
            <IconButton aria-label="Printer settings"><Gear /></IconButton>
          </PanelHeader>
          <PrinterBody>
            <Line>
              <Select id="printer" label="Printer" value="Bambu Lab X1 Carbon 0.4 nozzle" h={33} />
              <IconButton $w={20} aria-label="Edit printer"><Edit /></IconButton>
            </Line>
            <BedLine>
              <BedLabel htmlFor="bed">Bed type</BedLabel>
              <Select id="bed" label="Bed type" value="Cool Plate" h={36} />
            </BedLine>
          </PrinterBody>

          <PanelHeader $h={49}>
            <Icon w={24} h={22} stroke="#6f7475">
              <ellipse cx="4" cy="11" rx="2.500" ry="10" /><ellipse cx="20" cy="11" rx="2.500" ry="10" />
              <path d="M10 1Q7 3 7 11Q7 19 10 21M13.500 1Q11 3 11 11Q11 19 13.500 21M17 1Q15 3 15 11Q15 19 17 21" stroke="#1f9a52" />
            </Icon>
            <PanelTitle>Filament</PanelTitle>
            <FlushButton>Flushing volumes</FlushButton>
            <HeaderTools>
              <IconButton aria-label="Add filament"><Icon w={18} h={18} stroke="#333b3c" sw={2}><path d="M0 9H18M9 0V18" /></Icon></IconButton>
              <IconButton aria-label="Remove filament"><Icon w={18} h={18} stroke="#333b3c" sw={2}><path d="M0 9H18" /></Icon></IconButton>
              <IconButton $w={28} aria-label="Filament settings"><Gear /></IconButton>
            </HeaderTools>
          </PanelHeader>
          <FilamentGrid>
            {filaments.map(f => (
              <FilamentItem key={f.n}>
                <Swatch $bg={f.bg} $fg={f.fg} $outlined={f.outlined}>{f.n}</Swatch>
                <Select id={`filament-${f.n}`} label={`Filament ${f.n}`} value={f.name} h={36} />
                <IconButton $w={22} aria-label={`Edit filament ${f.n}`}><Edit /></IconButton>
              </FilamentItem>
            ))}
          </FilamentGrid>

          <PanelHeader $h={47} $end={13}>
            <Icon w={26} h={22} stroke="#6f7475" sw={2}>
              <path d="M9 1.500H24L18 9H3Z" />
              <path d="M3 14.500H18L25 7.500" stroke="#1f9a52" />
              <path d="M3 20H18L25 13" />
            </Icon>
            <ProcessTitle>Process</ProcessTitle>
            <Segmented>
              <Segment $on>Global</Segment>
              <Segment>Objects</Segment>
            </Segmented>
            <SwitchLabel>
              Advanced
              <Switch type="checkbox" checked={advanced} onChange={e => setAdvanced(e.target.checked)} />
            </SwitchLabel>
            <IconButton aria-label="Compare presets">
              <Icon w={22} h={24} stroke="#92ae9d" sw={2}>
                <circle cx="7" cy="7" r="5.500" strokeDasharray="3 1" /><circle cx="7" cy="7" r="2" /><circle cx="18" cy="7" r="3" /><circle cx="7" cy="19" r="3" />
                <path d="M12 13L20 22" strokeWidth="3" />
              </Icon>
            </IconButton>
          </PanelHeader>
          <PresetLine>
            <PresetSelect>
              <Select id="preset" label="Process preset" value="0.16mm Optimal @BBL X1C" h={46} />
            </PresetSelect>
            <IconButton $w={28} aria-label="Save preset"><Floppy /></IconButton>
            <IconButton aria-label="Search settings">
              <Icon w={24} h={24} stroke="#3f4748"><circle cx="9.500" cy="9.500" r="8" /><path d="M15.500 15.500L23 23" /></Icon>
            </IconButton>
          </PresetLine>
          <SettingTabs role="tablist">
            {['Quality', 'Strength', 'Speed', 'Support', 'Others'].map(t => (
              <SettingTab key={t} role="tab" aria-selected={t === tab} $on={t === tab} onClick={() => setTab(t)}>{t}</SettingTab>
            ))}
          </SettingTabs>
          <ScrollPane>
            <Settings>
              {groups.map(g => (
                <section key={g.title}>
                  <GroupTitle>{g.title}</GroupTitle>
                  {g.rows.map(([label, value]) => {
                    const id = `${slug(g.title)}-${slug(label)}`;
                    return (
                      <SettingRow key={id}>
                        <SettingLabel htmlFor={id}>{label}</SettingLabel>
                        {value === null ? (
                          <Check id={id} type="checkbox" />
                        ) : (
                          <ValueBox>
                            <ValueInput id={id} defaultValue={value} />
                            <Unit>mm</Unit>
                          </ValueBox>
                        )}
                      </SettingRow>
                    );
                  })}
                </section>
              ))}
            </Settings>
            <ScrollTrack>
              <ScrollButton $h={26} aria-label="Scroll up"><Icon w={14} h={10} stroke="#4f5354" sw={2.5}><path d="M1 9L7 2L13 9" /></Icon></ScrollButton>
              <ScrollThumb />
              <ScrollRest />
              <ScrollButton $h={17} aria-label="Scroll down"><Icon w={14} h={10} stroke="#4f5354" sw={2.5}><path d="M1 1L7 8L13 1" /></Icon></ScrollButton>
            </ScrollTrack>
          </ScrollPane>
        </Sidebar>

        <Viewport>
          <Toolbar role="toolbar">
            <ToolGroup>{addTools.map(t => <ToolButton key={t.name} aria-label={t.name}>{t.art}</ToolButton>)}</ToolGroup>
            <ToolGroup>
              <ToolButton aria-label="Split to objects"><Page letter="O" /></ToolButton>
              <ToolButton aria-label="Split to parts"><Page letter="P" /></ToolButton>
            </ToolGroup>
            <ToolDivider />
            <ToolGroup>{editTools.map(t => <ToolButton key={t.name} $w={65} aria-label={t.name}>{t.art}</ToolButton>)}</ToolGroup>
            <ToolDivider />
            <ToolGroup><ToolButton aria-label="Assembly view"><Assembly /></ToolButton></ToolGroup>
          </Toolbar>

          <Plate>
            <Scene />
            <PlateButtons>
              <PlateButton aria-label="Remove plate"><Icon w={14} h={14} stroke="#4c5556"><path d="M1 1L13 13M13 1L1 13" /></Icon></PlateButton>
              <PlateButton aria-label="Orient plate"><svg width="18" height="17" viewBox="0 0 60 56" fill="none" stroke="#4c5556" strokeWidth="4"><FlattenShape /><path d="M2 10H22" /></svg></PlateButton>
              <PlateButton aria-label="Arrange plate"><Icon w={16} h={16} stroke="#5d6667" sw={1.2}><path d="M1 1.500H15V6H1ZM1 8.500H5V15H1ZM7.500 8.500H15V11H7.500ZM7.500 13H15V15H7.500Z" /></Icon></PlateButton>
              <PlateButton aria-label="Lock plate"><Icon w={12} h={14} stroke="#3a4243" sw={1.6}><path d="M3 5V3.500Q3 1 6 1Q9 1 9 3.500V7" /><rect x="1.500" y="7" width="9" height="6" fill="#3a4243" /></Icon></PlateButton>
            </PlateButtons>
          </Plate>

          <Toasts>
            {toasts.map(t => (
              <Toast key={t.head} $tone={t.tone} role="alert">
                <ToastText>{t.head}<br />{t.text} <More href="#more">More</More></ToastText>
                <ToastClose aria-label="Dismiss"><Icon w={24} h={24} stroke="#a9abab" sw={2}><path d="M1 1L23 23M23 1L1 23" /></Icon></ToastClose>
              </Toast>
            ))}
          </Toasts>
        </Viewport>
      </Body>
    </Shell>
  );
}
